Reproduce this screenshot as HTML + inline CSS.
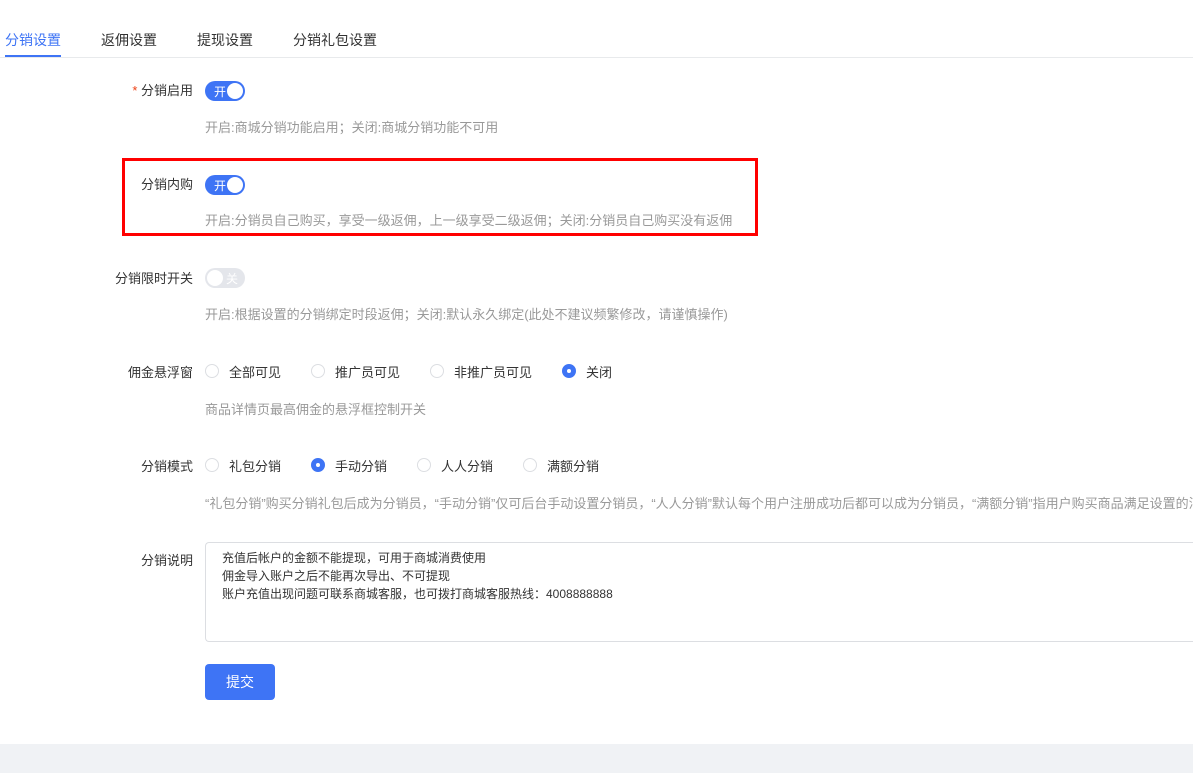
<!DOCTYPE html>
<html><head><meta charset="utf-8"><style>
*{margin:0;padding:0;box-sizing:border-box}
html,body{width:1193px;height:773px;overflow:hidden}
body{background:#fff;font-family:"Liberation Sans","Noto Sans CJK SC",sans-serif;color:#333;position:relative}
.a{position:absolute;white-space:nowrap}
.tab{top:30px;font-size:14px;color:#333}
.lab{font-size:13px;color:#333;right:1000px;text-align:right}
.help{font-size:13px;color:#999;left:205px}
.sw{position:absolute;left:205px;width:40px;height:20px;border-radius:10px;background:#3e74f5;color:#fff;font-size:12px}
.sw span{position:absolute;left:9px;top:2px}
.sw i{position:absolute;right:2px;top:2px;width:16px;height:16px;border-radius:50%;background:#fff}
.sw.off{background:#e4e6eb}
.sw.off span{left:auto;right:7px}
.sw.off i{left:2px;right:auto}
.r{position:absolute;width:14px;height:14px;border:1px solid #dcdee2;border-radius:50%;background:#fff}
.r.on{border-color:#3e74f5;background:#3e74f5}
.r.on:after{content:"";position:absolute;left:4px;top:4px;width:4px;height:4px;border-radius:50%;background:#fff}
.rt{font-size:13px;color:#333}
</style></head><body>
<div class="a tab" style="left:5px;color:#3e74f5">分销设置</div>
<div class="a" style="left:5px;top:55px;width:56px;height:3px;background:#3e74f5"></div>
<div class="a tab" style="left:101px">返佣设置</div>
<div class="a tab" style="left:197px">提现设置</div>
<div class="a tab" style="left:293px">分销礼包设置</div>
<div class="a" style="left:0;top:57px;width:1193px;height:1px;background:#e8eaec"></div>

<div class="a lab" style="top:80px"><span style="color:#ed4014">*</span> 分销启用</div>
<div class="sw" style="top:81px"><span>开</span><i></i></div>
<div class="a help" style="top:117px">开启:商城分销功能启用；关闭:商城分销功能不可用</div>

<div class="a" style="left:122px;top:158px;width:636px;height:78px;border:3px solid #f00"></div>
<div class="a lab" style="top:174px">分销内购</div>
<div class="sw" style="top:175px"><span>开</span><i></i></div>
<div class="a help" style="top:210px">开启:分销员自己购买，享受一级返佣，上一级享受二级返佣；关闭:分销员自己购买没有返佣</div>

<div class="a lab" style="top:268px">分销限时开关</div>
<div class="sw off" style="top:268px"><span>关</span><i></i></div>
<div class="a help" style="top:304px">开启:根据设置的分销绑定时段返佣；关闭:默认永久绑定(此处不建议频繁修改，请谨慎操作)</div>

<div class="a lab" style="top:362px">佣金悬浮窗</div>
<div class="r" style="left:205px;top:364px"></div><div class="a rt" style="left:229px;top:362px">全部可见</div>
<div class="r" style="left:311px;top:364px"></div><div class="a rt" style="left:335px;top:362px">推广员可见</div>
<div class="r" style="left:430px;top:364px"></div><div class="a rt" style="left:454px;top:362px">非推广员可见</div>
<div class="r on" style="left:562px;top:364px"></div><div class="a rt" style="left:586px;top:362px">关闭</div>
<div class="a help" style="top:399px">商品详情页最高佣金的悬浮框控制开关</div>

<div class="a lab" style="top:456px">分销模式</div>
<div class="r" style="left:205px;top:458px"></div><div class="a rt" style="left:229px;top:456px">礼包分销</div>
<div class="r on" style="left:311px;top:458px"></div><div class="a rt" style="left:335px;top:456px">手动分销</div>
<div class="r" style="left:417px;top:458px"></div><div class="a rt" style="left:441px;top:456px">人人分销</div>
<div class="r" style="left:523px;top:458px"></div><div class="a rt" style="left:547px;top:456px">满额分销</div>
<div class="a help" style="top:493px;width:988px;overflow:hidden">“礼包分销”购买分销礼包后成为分销员，“手动分销”仅可后台手动设置分销员，“人人分销”默认每个用户注册成功后都可以成为分销员，“满额分销”指用户购买商品满足设置的消费金额后成为分销员</div>

<div class="a lab" style="top:550px">分销说明</div>
<div class="a" style="left:205px;top:542px;width:988px;height:100px;border:1px solid #dcdee2;border-right:none;border-radius:4px 0 0 4px;font-size:12px;line-height:18px;padding:6px 0 0 16px;color:#333">充值后帐户的金额不能提现，可用于商城消费使用<br>佣金导入账户之后不能再次导出、不可提现<br>账户充值出现问题可联系商城客服，也可拨打商城客服热线：4008888888</div>

<div class="a" style="left:205px;top:664px;width:70px;height:36px;border-radius:4px;background:#3e74f5;color:#fff;font-size:14px;text-align:center;line-height:36px">提交</div>

<div class="a" style="left:0;top:744px;width:1193px;height:29px;background:#f0f2f5"></div>
</body></html>
